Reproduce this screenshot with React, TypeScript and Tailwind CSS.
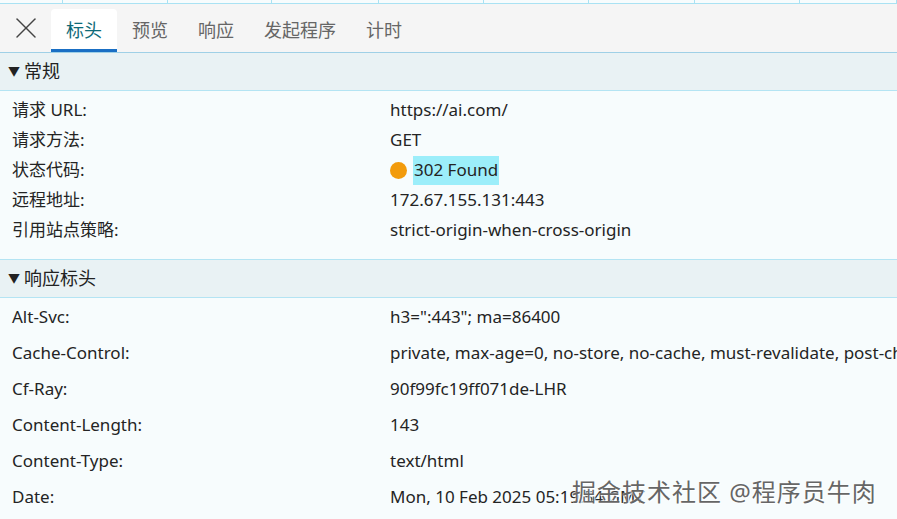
import { X } from "lucide-react";

const tabs = ["标头", "预览", "响应", "发起程序", "计时"];

const general = [
  { k: "请求 URL:", v: "https://ai.com/" },
  { k: "请求方法:", v: "GET" },
  { k: "状态代码:", v: "302 Found", status: true },
  { k: "远程地址:", v: "172.67.155.131:443" },
  { k: "引用站点策略:", v: "strict-origin-when-cross-origin" },
];

const response = [
  { k: "Alt-Svc:", v: 'h3=":443"; ma=86400' },
  { k: "Cache-Control:", v: "private, max-age=0, no-store, no-cache, must-revalidate, post-check=0, pre-check=0" },
  { k: "Cf-Ray:", v: "90f99fc19ff071de-LHR" },
  { k: "Content-Length:", v: "143" },
  { k: "Content-Type:", v: "text/html" },
  { k: "Date:", v: "Mon, 10 Feb 2025 05:19:54 GMT" },
];

function SectionHeader({ title }: { title: string }) {
  return (
    <div className="h-[38px] flex items-center pl-[8px] bg-[#e9f2f4] border-b border-[#b4e4f3] text-[18px] text-[#222]">
      <span className="text-[12px] mr-[4px] mt-[1px]">▼</span>
      {title}
    </div>
  );
}

export default function App() {
  return (
    <div
      className="relative w-[897px] h-[519px] overflow-hidden bg-[#f7fcfd] text-[#242424]"
      style={{ fontFamily: '"Noto Sans", "Noto Sans CJK SC", sans-serif' }}
    >
      {/* cut-off grid row at top */}
      <div className="h-[4px] flex border-b border-[#a9e2f3] bg-[#f7fcfd]">
        {[63, 105, 104, 107, 105, 105, 106, 105, 97].map((w, i) => (
          <div key={i} style={{ width: w }} className="border-r border-[#a9e2f3] h-full" />
        ))}
      </div>

      {/* Tab bar */}
      <div className="h-[49px] flex items-end bg-[#f5f5f5] border-b border-[#9fd0e6]">
        <div className="w-[51px] h-full flex items-center justify-center">
          <X className="w-[36px] h-[36px] text-[#444]" strokeWidth={1} />
        </div>
        {tabs.map((t, i) => (
          <div
            key={t}
            className={
              i === 0
                ? "h-[43px] px-[15px] flex items-center bg-white rounded-t-[4px] border-b-[3px] border-[#1a6fc4] text-[18px] text-[#0e6a78]"
                : "h-[43px] px-[15px] flex items-center text-[18px] text-[#666]"
            }
          >
            <span className={i === 0 ? "mt-[3px]" : ""}>{t}</span>
          </div>
        ))}
      </div>

      <SectionHeader title="常规" />
      <div className="pt-[4px] pb-[14px] border-b border-[#b4e4f3]">
        {general.map((r) => (
          <div key={r.k} className="h-[30px] flex items-center text-[17px] whitespace-nowrap">
            <div className="w-[390px] pl-[12px] shrink-0">{r.k}</div>
            {r.status ? (
              <div className="flex items-center">
                <span className="w-[17px] h-[17px] rounded-full bg-[#f29b0c] mr-[6px]" />
                <span className="bg-[#9ceefa] h-[29px] px-[1px] flex items-center">{r.v}</span>
              </div>
            ) : (
              <div>{r.v}</div>
            )}
          </div>
        ))}
      </div>

      <SectionHeader title="响应标头" />
      <div className="pt-[1px]">
        {response.map((r) => (
          <div key={r.k} className="h-[36px] flex items-center text-[17px] whitespace-nowrap">
            <div className="w-[390px] pl-[12px] shrink-0">{r.k}</div>
            <div>{r.v}</div>
          </div>
        ))}
      </div>

      {/* watermark */}
      <div
        className="absolute left-[572px] top-[474px] text-[24px] text-[#666] whitespace-nowrap tracking-[1px]"
        style={{ textShadow: "0 0 2px #fff, 1px 1px 1px #fff" }}
      >
        掘金技术社区 @程序员牛肉
      </div>
    </div>
  );
}
